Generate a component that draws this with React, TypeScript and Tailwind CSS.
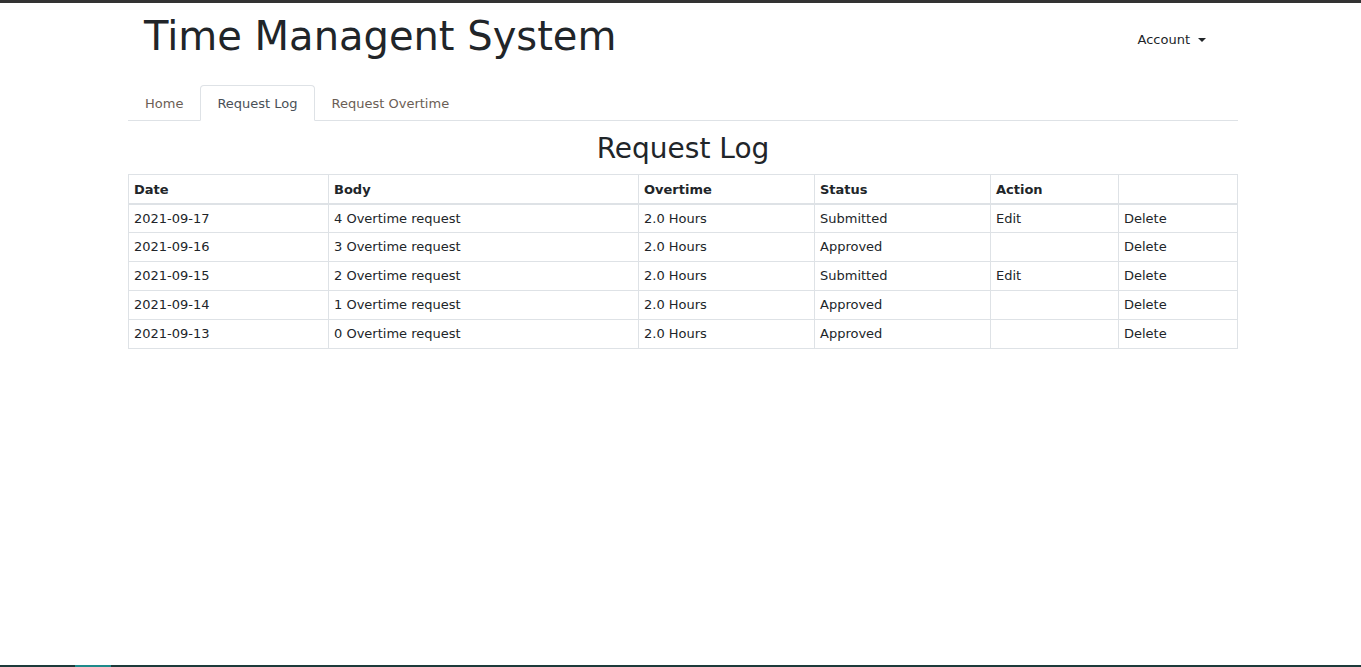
const ROWS = [
  { date: "2021-09-17", body: "4 Overtime request", ot: "2.0 Hours", status: "Submitted", edit: true },
  { date: "2021-09-16", body: "3 Overtime request", ot: "2.0 Hours", status: "Approved", edit: false },
  { date: "2021-09-15", body: "2 Overtime request", ot: "2.0 Hours", status: "Submitted", edit: true },
  { date: "2021-09-14", body: "1 Overtime request", ot: "2.0 Hours", status: "Approved", edit: false },
  { date: "2021-09-13", body: "0 Overtime request", ot: "2.0 Hours", status: "Approved", edit: false },
];

const cell = "border border-[#dee2e6] px-[5px] h-[29px] align-middle";

export default function App() {
  return (
    <div className="min-h-screen bg-white text-[#212529] border-t-[3px] border-[#333] flex flex-col" style={{ fontFamily: '"DejaVu Sans", Verdana, sans-serif' }}>
      <div className="ml-[128px] w-[1110px] flex-1">
        {/* Header */}
        <div className="flex items-start justify-between">
          <h1 className="ml-[16px] mt-[9px] text-[40px] leading-[48px] font-normal">Time Managent System</h1>
          <button type="button" className="mt-[27px] mr-[32px] flex items-center gap-[8px] text-[13px] text-[#212529]">
            Account
            <span className="inline-block border-t-[4px] border-t-[#212529] border-x-[4px] border-x-transparent" />
          </button>
        </div>

        {/* Tabs */}
        <div className="mt-[25px] flex border-b border-[#dee2e6] text-[13px] h-[36px]">
          <a className="px-[16px] pt-[2px] flex items-center text-[#6b5e55] border border-transparent">Home</a>
          <a className="px-[16px] pt-[2px] flex items-center text-[#495057] bg-white border border-[#dee2e6] border-b-white rounded-t-[4px] -mb-px">Request Log</a>
          <a className="px-[16px] pt-[2px] flex items-center text-[#6b5e55] border border-transparent">Request Overtime</a>
        </div>

        {/* Title */}
        <h2 className="text-center text-[28px] leading-[34px] mt-[11px] mb-[8px] font-normal">Request Log</h2>

        {/* Table */}
        <table className="w-full border-collapse text-[13px] text-left">
          <thead>
            <tr className="border-b-2 border-[#dee2e6]">
              <th className={`${cell} pt-[2px] w-[200px] font-bold`}>Date</th>
              <th className={`${cell} pt-[2px] w-[310px] font-bold`}>Body</th>
              <th className={`${cell} pt-[2px] w-[176px] font-bold`}>Overtime</th>
              <th className={`${cell} pt-[2px] w-[176px] font-bold`}>Status</th>
              <th className={`${cell} pt-[2px] w-[128px] font-bold`}>Action</th>
              <th className={cell}></th>
            </tr>
          </thead>
          <tbody>
            {ROWS.map((r) => (
              <tr key={r.date}>
                <td className={cell}>{r.date}</td>
                <td className={cell}>{r.body}</td>
                <td className={cell}>{r.ot}</td>
                <td className={cell}>{r.status}</td>
                <td className={cell}>{r.edit ? "Edit" : ""}</td>
                <td className={cell}>Delete</td>
              </tr>
            ))}
          </tbody>
        </table>
      </div>
      <div className="h-[2px] bg-[#1d3a3a] flex">
        <div className="ml-[75px] w-[36px] bg-[#1e8a8a]" />
      </div>
    </div>
  );
}
